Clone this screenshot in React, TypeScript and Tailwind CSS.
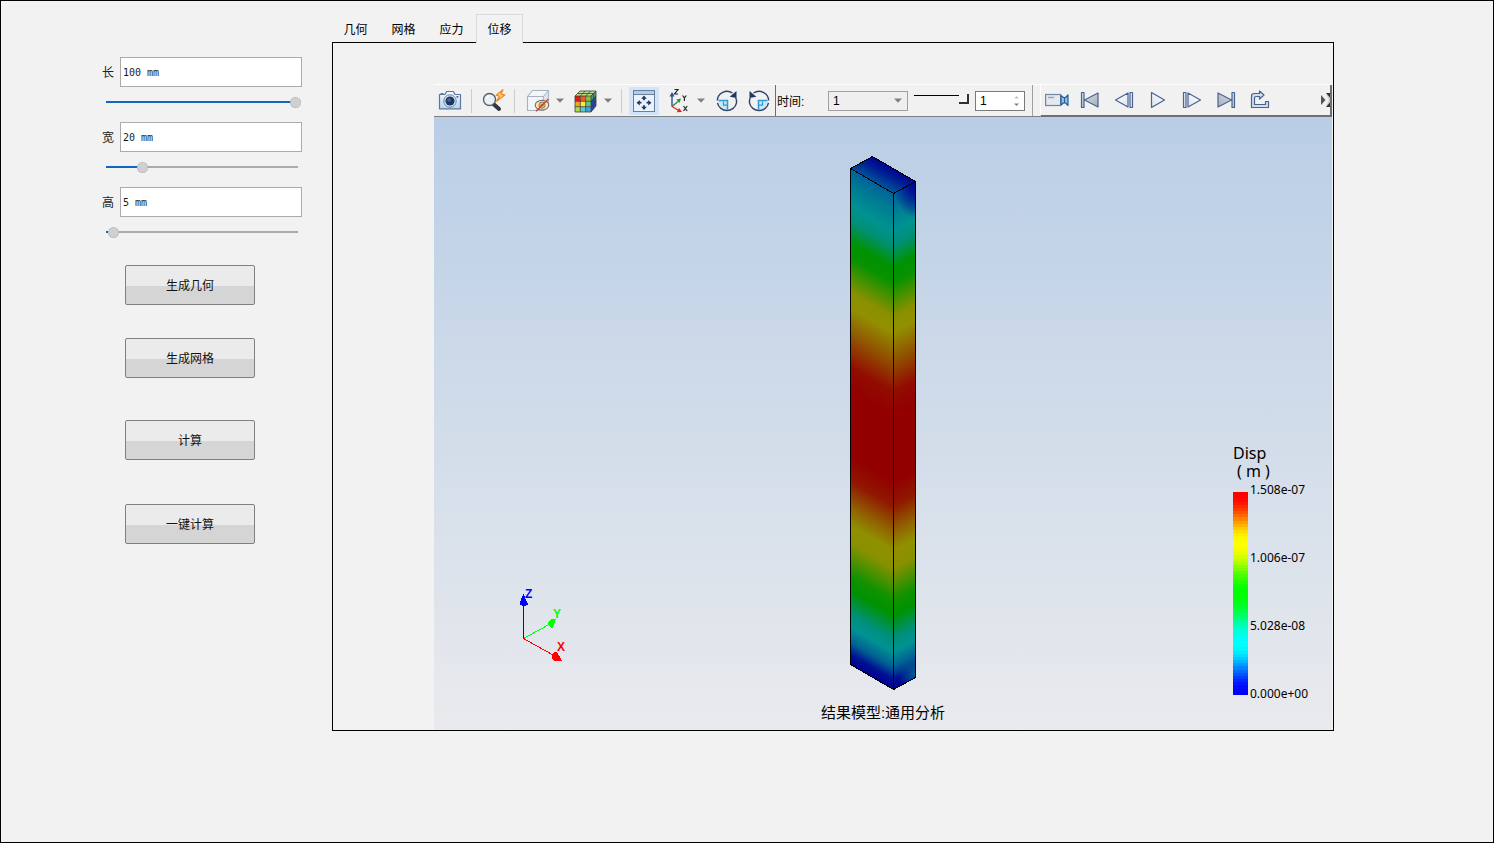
import { useState } from "react";
import type { ReactNode } from "react";

const INK = "#1f3864";

function CameraIcon() {
  return (
    <svg width="24" height="22" viewBox="0 0 24 22" aria-hidden="true">
      <defs>
        <linearGradient id="camBody" x1="0" y1="0" x2="0" y2="1">
          <stop offset="0" stopColor="#f4f9fe" />
          <stop offset="1" stopColor="#b9d3ee" />
        </linearGradient>
      </defs>
      <path d="M1.5 4.5h5.500l1.600-3h6.800l1.600 3h5.500v14.400h-21z" fill="url(#camBody)" stroke="#5b789f" strokeWidth="1.2" strokeLinejoin="round" />
      <path d="M2.500 3.500h3" stroke="#5b789f" />
      <circle cx="12" cy="11" r="6.200" fill="#dbe9f7" stroke="#6681a6" />
      <circle cx="12" cy="11" r="4.600" fill="#1d3765" />
      <circle cx="11" cy="10" r="1.800" fill="#4a6694" />
      <rect x="18.5" y="6" width="1.8" height="1.6" fill="#3f5f90" />
    </svg>
  );
}

function QueryIcon() {
  return (
    <svg width="26" height="24" viewBox="0 0 26 24" aria-hidden="true">
      <path d="M13.500 15l5.500 5" stroke="#33373d" strokeWidth="4" strokeLinecap="round" />
      <circle cx="9.500" cy="10.500" r="6" fill="#e9f1f8" stroke="#59616b" strokeWidth="1.4" />
      <path d="M6.500 9.500a3.400 3.400 0 0 1 3-2.600" fill="none" stroke="#fff" strokeWidth="1.3" />
      <path d="M23 0.800l-7 5.400 3.600 1-3 5 8.200-6.200-3.800-.9z" fill="#fdd98a" stroke="#ee8a22" strokeWidth="1.3" strokeLinejoin="round" />
    </svg>
  );
}

function HideBoxIcon() {
  return (
    <svg width="26" height="24" viewBox="0 0 26 24" aria-hidden="true">
      <path d="M2.5 7.5l5-6h16v14l-5 6h-16z" fill="#f3f5f8" stroke="#a7b2c1" strokeWidth="1.1" strokeLinejoin="round" />
      <path d="M2.5 7.5h16v14M18.5 7.5l5-6" fill="none" stroke="#a7b2c1" strokeWidth="1.1" />
      <path d="M18.9 7.8l4.3-5.2v12.7l-4.3 5.2z" fill="#dce2ea" />
      <ellipse cx="17" cy="16.2" rx="6.8" ry="4.800" fill="#fbe8b0" stroke="#77706a" strokeWidth="1.1" />
      <circle cx="17" cy="16.2" r="3.1" fill="#e9c46b" stroke="#8a7d60" />
      <circle cx="17" cy="16.2" r="1.3" fill="#5576a5" />
      <path d="M11 22.3L23.5 10" stroke="#d23c2c" strokeWidth="1.4" />
    </svg>
  );
}

function ColorCubeIcon() {
  return (
    <svg width="24" height="24" viewBox="0 0 24 24" aria-hidden="true">
      <path d="M1 7l5-5h16l-5 5z" fill="#b7e08f" />
      <path d="M17 7l5-5v15l-5 6z" fill="#2347a8" />
      <path d="M17 7l5-5v5l-5 5z" fill="#4e9a68" />
      <path d="M1 7h5.3v5.3H1z" fill="#e21b1b" />
      <path d="M6.3 7h5.4v5.3H6.3z" fill="#ef5b25" />
      <path d="M11.7 7H17v5.3h-5.3z" fill="#86c440" />
      <path d="M1 12.3h5.3v5.4H1z" fill="#f0a221" />
      <path d="M6.3 12.3h5.4v5.4H6.3z" fill="#ffe83b" />
      <path d="M11.7 12.3H17v5.4h-5.3z" fill="#55c98a" />
      <path d="M1 17.7h5.3V23H1z" fill="#a6dd4c" />
      <path d="M6.3 17.7h5.4V23H6.3z" fill="#52cfc2" />
      <path d="M11.7 17.7H17V23h-5.3z" fill="#3aa4ee" />
      <path d="M1 7h16v16H1zM6.3 7v16M11.7 7v16M1 12.3h16M1 17.7h16M1 7l5-5h16l-5 5M6.3 7l5-5M11.7 7l5-5M3.4 4.5h16M22 2v15l-5 6M19.5 4.5v15.6M17 12.3l5-5.3M17 17.7l5-5.5" fill="none" stroke="#473c31" strokeWidth="0.8" />
    </svg>
  );
}

function FitIcon() {
  return (
    <svg width="24" height="24" viewBox="0 0 24 24" aria-hidden="true">
      <rect x="1.5" y="1.5" width="21" height="21" fill="#eaf3fb" stroke="#67809f" />
      <rect x="2" y="2" width="20" height="3" fill="#b7cade" />
      <path d="M1.5 5.5h21" stroke="#67809f" />
      <path d="M12 6.500l2.800 3.200h-1.900v1.600h-1.800V9.700H9.200zM12 21l-2.800-3.200h1.900v-1.600h1.800v1.600h1.900zM4.500 13.700l3.300-2.800v1.900h1.700v1.800H7.800v1.900zM19.500 13.700l-3.300 2.800v-1.900h-1.700v-1.800h1.700v-1.900z" fill={INK} />
    </svg>
  );
}

function AxesIcon() {
  return (
    <svg width="22" height="26" viewBox="0 0 22 26" aria-hidden="true">
      <path d="M4 18.500V7" stroke="#2a4f9c" strokeWidth="1.4" />
      <path d="M4 4l2.500 4.500h-5z" fill="#2a4f9c" />
      <path d="M4 18.500l6-5" stroke="#239142" strokeWidth="1.400" />
      <path d="M13 10.500l-1.500 4.500-3.200-3.600z" fill="#239142" />
      <path d="M4 18.500l6 3.500" stroke="#e02424" strokeWidth="1.400" />
      <path d="M14 24l-5.200.3 2.300-4.300z" fill="#e02424" />
      <path d="M6.500 1.500h3.500l-3.500 4.500h3.500" fill="none" stroke="#222" strokeWidth="1.200" />
      <path d="M14.500 7.500l1.900 2.400L18.300 7.500M16.400 9.900v3" fill="none" stroke="#222" strokeWidth="1.200" />
      <path d="M15.500 18l3.700 5M19.200 18l-3.700 5" stroke="#222" strokeWidth="1.200" />
    </svg>
  );
}

function RotateIcon({ reverse = false }: { reverse?: boolean }) {
  return (
    <svg width="24" height="24" viewBox="0 0 24 24" aria-hidden="true">
      <g transform={reverse ? "matrix(-1 0 0 1 24 0)" : undefined}>
        <path d="M3.500 12h9v8.500a9 9 0 0 1-9-8.500z" fill="#c5e8fa" />
        <path d="M3.500 11.500h9V20.500" fill="none" stroke="#2f9ad2" strokeWidth="1.500" />
        <path d="M8.500 12.500v3.700h4" fill="none" stroke="#2f9ad2" strokeWidth="1.200" />
        <path d="M17.500 4A9.700 9.700 0 0 0 2.300 11.500M2.500 13.800a9.700 9.700 0 0 0 19 0 9.700 9.700 0 0 0-.8-5" fill="none" stroke="#32466b" strokeWidth="1.400" />
        <path d="M21.500 2v7l-6.800-1.300z" fill={INK} />
      </g>
    </svg>
  );
}

function VideoIcon() {
  return (
    <svg width="24" height="14" viewBox="0 0 24 14" aria-hidden="true">
      <rect x="0.600" y="1.500" width="15" height="11" fill="#e3e9f0" stroke="#7184a0" strokeWidth="1.200" />
      <path d="M3 4.500h6" stroke="#9aa6b6" strokeWidth="1.500" />
      <path d="M16 2.500l2.500 2h2L23 2v10.500L20.500 10h-2L16 12z" fill="#87bce4" stroke="#2b5c96" strokeWidth="1.200" strokeLinejoin="round" />
      <path d="M19.500 4.500v5.500" stroke="#2b5c96" />
    </svg>
  );
}

type PlayKind = "first" | "prev" | "play" | "next" | "last";

function PlaybackIcon({ kind }: { kind: PlayKind }) {
  const flip = kind === "next" || kind === "last" || kind === "play";
  const edge = kind === "first" || kind === "last";
  return (
    <svg width="20" height="18" viewBox="0 0 20 18" aria-hidden="true">
      <defs>
        <linearGradient id={"play-" + kind} x1="0" y1="0" x2="1" y2="1">
          <stop offset="0" stopColor={edge ? "#dfe2e6" : "#ffffff"} />
          <stop offset="1" stopColor={edge ? "#a5adb8" : "#d9e0e8"} />
        </linearGradient>
      </defs>
      <g transform={flip ? "matrix(-1 0 0 1 20 0)" : undefined} stroke="#496290" strokeWidth="1.200" strokeLinejoin="round">
        {edge && <path d="M1.500 1.500h2.500v15H1.500zM18 2v14L4.500 9z" fill={"url(#play-" + kind + ")"} />}
        {kind === "play" && <path d="M16.500 1.500v15L3.500 9z" fill="url(#play-play)" />}
        {(kind === "prev" || kind === "next") && (
          <path d="M14 2v14L1.500 9zM16 1.500h2.500v15H16z" fill={"url(#play-" + kind + ")"} />
        )}
      </g>
    </svg>
  );
}

function ExportIcon() {
  return (
    <svg width="20" height="20" viewBox="0 0 20 20" aria-hidden="true">
      <path
        d="M1.500 17.500V6Q1.500 3.500 4 3.500h5.500V1l4.500 4-4.500 4V6.500H6Q4.500 6.500 4.500 8v6.500h11V11.500H18.500v6z"
        fill="#cfdeed"
        stroke="#496290"
        strokeWidth="1.200"
        strokeLinejoin="round"
      />
    </svg>
  );
}

function DownTriangle() {
  return (
    <svg width="8" height="5" viewBox="0 0 8 5" className="fill-[#808080]" aria-hidden="true">
      <path d="M0 0.500h8L4 4.800z" />
    </svg>
  );
}

function ToolButton({ label, wide = false, children }: { label: string; wide?: boolean; children: ReactNode }) {
  return (
    <button
      type="button"
      aria-label={label}
      className={`flex h-8 shrink-0 items-center justify-center ${wide ? "w-[34px]" : "w-8"}`}
    >
      {children}
    </button>
  );
}

function MenuArrow({ label }: { label: string }) {
  return (
    <button type="button" aria-label={label} className="flex h-8 w-4 shrink-0 items-center pl-0.5">
      <DownTriangle />
    </button>
  );
}

function Separator() {
  return <span className="mx-[5px] h-6 w-px shrink-0 bg-[#cdcdcd]" />;
}

function Toolbar() {
  const [step, setStep] = useState("1");
  return (
    <div className="flex h-[33px] items-start border-t border-b border-t-white border-b-[#7f7f7f] bg-[#f1f1f1]">
      <div className="flex h-[31px] shrink-0 items-center">
        <ToolButton label="截图"><CameraIcon /></ToolButton>
        <Separator />
        <ToolButton label="查询"><QueryIcon /></ToolButton>
        <Separator />
        <div className="flex pl-0.5">
          <ToolButton label="隐藏"><HideBoxIcon /></ToolButton>
          <MenuArrow label="隐藏选项" />
          <ToolButton label="云图"><ColorCubeIcon /></ToolButton>
          <MenuArrow label="云图选项" />
        </div>
        <span className="mr-[7px] ml-[3px] h-6 w-px shrink-0 bg-[#cdcdcd]" />
        <button type="button" aria-label="适应窗口" className="flex h-7 w-[30px] items-center justify-center bg-[#d3e3f8]">
          <FitIcon />
        </button>
        <div className="flex pl-1">
          <ToolButton label="视角"><AxesIcon /></ToolButton>
          <MenuArrow label="视角选项" />
          <ToolButton label="顺时针旋转"><RotateIcon /></ToolButton>
          <ToolButton label="逆时针旋转"><RotateIcon reverse /></ToolButton>
        </div>
      </div>
      <div className="flex h-[31px] shrink-0 items-center border-l border-[#6d6d6d] pl-px">
        <label htmlFor="time" className="w-[51px] pt-0.5 text-xs text-black">时间:</label>
        <div className="relative">
          <select
            id="time"
            defaultValue="1"
            className="block h-5 w-20 appearance-none border border-[#a0a0a0] bg-[#efefef] pl-1 text-xs leading-4 text-black"
          >
            <option>1</option>
          </select>
          <span className="pointer-events-none absolute top-[7px] right-1.5">
            <DownTriangle />
          </span>
        </div>
        <input
          type="range"
          aria-label="时间步"
          min={0}
          max={1}
          defaultValue={1}
          className="mb-1 ml-1.5 h-[11px] w-[55px] appearance-none bg-[linear-gradient(#000,#000)] bg-[length:46px_1px] bg-[position:left_2px] bg-no-repeat [&::-webkit-slider-thumb]:h-[10px] [&::-webkit-slider-thumb]:w-[10px] [&::-webkit-slider-thumb]:appearance-none [&::-webkit-slider-thumb]:border-r-2 [&::-webkit-slider-thumb]:border-b-2 [&::-webkit-slider-thumb]:border-[#303030] [&::-webkit-slider-thumb]:bg-[#f4f4f4]"
        />
        <div className="ml-1.5 flex h-5 w-[50px] items-center border border-[#7a7a7a] bg-white">
          <input
            aria-label="步数"
            value={step}
            onChange={(e) => setStep(e.target.value)}
            className="h-4 w-0 flex-1 pl-1 text-xs text-black outline-none"
          />
          <svg width="7" height="12" viewBox="0 0 7 12" className="mr-1" aria-hidden="true">
            <path d="M1 3.500h5L3.500 1z" fill="#c4c4c4" />
            <path d="M1 8.500h5L3.500 11z" fill="#808080" />
          </svg>
        </div>
        <span className="mx-[7px] h-[31px] w-px bg-[#a0a0a0]" />
      </div>
      <div className="flex h-8 min-w-0 flex-1 items-center border-r-2 border-b-2 border-l border-[#6f6f6f] border-l-white bg-[#f1f1f1]">
        <ToolButton label="录制"><VideoIcon /></ToolButton>
        <ToolButton label="第一帧" wide><PlaybackIcon kind="first" /></ToolButton>
        <ToolButton label="上一帧" wide><PlaybackIcon kind="prev" /></ToolButton>
        <ToolButton label="播放" wide><PlaybackIcon kind="play" /></ToolButton>
        <ToolButton label="下一帧" wide><PlaybackIcon kind="next" /></ToolButton>
        <ToolButton label="最后一帧" wide><PlaybackIcon kind="last" /></ToolButton>
        <ToolButton label="导出" wide><ExportIcon /></ToolButton>
        <button type="button" aria-label="更多" className="ml-auto">
          <svg width="9" height="16" viewBox="0 0 9 16" aria-hidden="true">
            <path d="M0 3l4.500 5L0 13z" fill="#555" />
            <path d="M5 1h4v14H5l3-7z" fill="#c9c9c9" />
            <path d="M5 1h4v4.500zM5 15h4v-4.500z" fill="#333" />
          </svg>
        </button>
      </div>
    </div>
  );
}

const faceStops: [number, string][] = [
  [0, "#00629a"],
  [0.035, "#007c94"],
  [0.075, "#009290"],
  [0.105, "#009078"],
  [0.15, "#009200"],
  [0.18, "#089200"],
  [0.25, "#8a9000"],
  [0.28, "#929000"],
  [0.34, "#905000"],
  [0.4, "#920c00"],
  [0.45, "#920000"],
  [0.58, "#920000"],
  [0.63, "#901800"],
  [0.68, "#906000"],
  [0.72, "#909000"],
  [0.755, "#8a9000"],
  [0.82, "#109200"],
  [0.85, "#009200"],
  [0.9, "#009080"],
  [0.925, "#009292"],
  [0.955, "#006092"],
  [0.98, "#001092"],
  [1, "#000092"],
];

function BeamModel() {
  return (
    <svg width="66" height="535" viewBox="0 0 66 535" role="img" aria-label="位移云图">
      <defs>
        <linearGradient id="face" x1="0" y1="0" x2="0" y2="1">
          {faceStops.map(([offset, color]) => (
            <stop key={offset} offset={offset} stopColor={color} />
          ))}
        </linearGradient>
        <linearGradient id="cap" gradientUnits="userSpaceOnUse" x1="38" y1="8" x2="25" y2="32">
          <stop offset="0" stopColor="#000092" />
          <stop offset="0.35" stopColor="#001c94" />
          <stop offset="1" stopColor="#00689a" />
        </linearGradient>
        <radialGradient id="corner" gradientUnits="userSpaceOnUse" cx="0" cy="0" r="1" gradientTransform="translate(66 28) scale(23 34)">
          <stop offset="0" stopColor="#000092" />
          <stop offset="0.35" stopColor="#000e94" stopOpacity="0.9" />
          <stop offset="1" stopColor="#000092" stopOpacity="0" />
        </radialGradient>
        <radialGradient id="foot" gradientUnits="userSpaceOnUse" cx="0" cy="0" r="1" gradientTransform="translate(66 518) scale(18 22)">
          <stop offset="0" stopColor="#006c92" stopOpacity="0.9" />
          <stop offset="1" stopColor="#006c92" stopOpacity="0" />
        </radialGradient>
      </defs>
      <rect width="43.500" height="496" fill="url(#face)" transform="matrix(1 0.580 0 1 0 12.500)" />
      <rect width="22.500" height="496" fill="url(#face)" transform="matrix(1 -0.545 0 1 43.500 37.500)" />
      <path d="M43.500 37.500l22-12v50l-22 12z" fill="url(#corner)" />
      <path d="M43.500 533.500l22-12v-30l-22 12z" fill="url(#foot)" />
      <path d="M.5 12.500l22-12 43 25-22 12z" fill="url(#cap)" />
      <path
        d="M.5 12.500l22-12 43 25-22 12zM.5 12.500v496l43 25v-496M65.500 25.500v496l-22 12"
        fill="none"
        stroke="#000"
        shapeRendering="crispEdges"
      />
    </svg>
  );
}

function AxisTriad() {
  return (
    <svg
      width="52"
      height="78"
      viewBox="0 0 52 78"
      className="absolute bottom-[65px] left-[84px] text-xs font-bold"
      role="img"
      aria-label="坐标轴"
    >
      <g shapeRendering="crispEdges">
        <path d="M5.500 51.500V16" stroke="#0000ff" />
        <path d="M5.500 51.500L32 37" stroke="#00ff00" />
        <path d="M5.500 51.500L36 68.500" stroke="#ff0000" />
        <path d="M5.500 7l4 9v1.500h-2v1h-4v-1h-2V16z" fill="#0000ff" />
        <path d="M38 32h-5l-3 3v3l3 2.500h2z" fill="#00ff00" />
        <path d="M34 67l3-2h2l5 8.500h-8l-2-2.500z" fill="#ff0000" />
      </g>
      <text x="7" y="11" fill="#0000ff">Z</text>
      <text x="35" y="31" fill="#00ff00">Y</text>
      <text x="39" y="64" fill="#ff0000">X</text>
    </svg>
  );
}

const BAND_COUNT = 64;
const legendColors: [number, number, number][] = [
  [255, 0, 0],
  [255, 255, 0],
  [0, 255, 0],
  [0, 255, 255],
  [0, 0, 255],
];

function bandColor(index: number) {
  const t = (index / (BAND_COUNT - 1)) * 4;
  const segment = Math.min(3, Math.floor(t));
  const eased = (1 - Math.cos((t - segment) * Math.PI)) / 2;
  const mixed = legendColors[segment].map((from, channel) =>
    Math.round(from + (legendColors[segment + 1][channel] - from) * eased),
  );
  return `rgb(${mixed.join(",")})`;
}

function Legend() {
  return (
    <div className="absolute right-0 bottom-[30px] w-[99px] font-['Noto_Sans','Noto_Sans_CJK_SC',sans-serif] text-black">
      <p className="text-base leading-[18px]">
        Disp
        <br />
        <span className="pl-1">( m )</span>
      </p>
      <div className="mt-1 flex h-[216px]">
        <svg width="15" height="203" viewBox="0 0 15 203" className="mt-2 shrink-0" shapeRendering="crispEdges" aria-hidden="true">
          {Array.from({ length: BAND_COUNT }, (_, i) => (
            <rect key={i} y={(i * 203) / BAND_COUNT} width="15" height={203 / BAND_COUNT} fill={bandColor(i)} />
          ))}
        </svg>
        <ul className="flex flex-col justify-between pl-0.5 text-xs leading-3">
          <li>1.508e-07</li>
          <li>1.006e-07</li>
          <li>5.028e-08</li>
          <li>0.000e+00</li>
        </ul>
      </div>
    </div>
  );
}

function ResultView() {
  return (
    <section className="mt-[41px] mr-px ml-[101px] flex flex-col">
      <Toolbar />
      <div className="relative flex flex-col items-center bg-linear-to-b from-[#b9cee6] to-[#e9eaed] pt-[39px] pb-[7px]">
        <BeamModel />
        <p className="mt-[11px] text-[15px] leading-[21px] text-black">结果模型:通用分析</p>
        <AxisTriad />
        <Legend />
      </div>
    </section>
  );
}

const MIN_SIZE = 4;
const MAX_SIZE = 100;

function SizeField({ id, label, initial }: { id: string; label: string; initial: number }) {
  const [size, setSize] = useState(initial);
  const filled = ((size - MIN_SIZE) / (MAX_SIZE - MIN_SIZE)) * 100;
  return (
    <div className="flex flex-col gap-2">
      <div className="flex items-center">
        <label htmlFor={id} className="w-[18px] pt-0.5 text-xs text-[#222]">{label}</label>
        <input
          id={id}
          value={size + " mm"}
          onChange={(e) => setSize(Math.min(MAX_SIZE, parseInt(e.target.value, 10) || MIN_SIZE))}
          className="h-[30px] w-[182px] border border-[#ababab] bg-white px-0.5 font-['DejaVu_Sans_Mono',monospace] text-[10px] text-[#1a1a1a] outline-none"
        />
      </div>
      <input
        type="range"
        aria-label={label + "滑块"}
        min={MIN_SIZE}
        max={MAX_SIZE}
        value={size}
        onChange={(e) => setSize(Number(e.target.value))}
        style={{ backgroundImage: `linear-gradient(to right, #1068bd ${filled}%, #ababab ${filled}%)` }}
        className="ml-1 h-3.5 w-[195px] appearance-none bg-[length:192px_2px] bg-[position:left_center] bg-no-repeat [&::-webkit-slider-thumb]:h-[11px] [&::-webkit-slider-thumb]:w-[11px] [&::-webkit-slider-thumb]:appearance-none [&::-webkit-slider-thumb]:rounded-full [&::-webkit-slider-thumb]:border [&::-webkit-slider-thumb]:border-dotted [&::-webkit-slider-thumb]:border-[#a8a8a8] [&::-webkit-slider-thumb]:bg-[#d0d0d0]"
      />
    </div>
  );
}

function ActionButton({ children }: { children: ReactNode }) {
  return (
    <button
      type="button"
      className="h-10 w-[130px] rounded-xs border border-[#808080] bg-[linear-gradient(#ebebeb_52%,#d5d5d5_52%)] pt-0.5 text-xs text-[#111]"
    >
      {children}
    </button>
  );
}

const tabs = ["几何", "网格", "应力", "位移"];

export default function App() {
  const [active, setActive] = useState("位移");
  return (
    <div className="flex min-h-screen border border-black bg-[#f2f2f2] font-['Liberation_Sans','Noto_Sans_CJK_SC',sans-serif]">
      <aside className="w-[331px] shrink-0 pt-14 pl-[101px]">
        <div className="flex flex-col gap-[13px]">
          <SizeField id="length" label="长" initial={100} />
          <SizeField id="width" label="宽" initial={20} />
          <SizeField id="height" label="高" initial={5} />
        </div>
        <div className="mt-[26px] flex flex-col items-start pl-[23px]">
          <ActionButton>生成几何</ActionButton>
          <div className="mt-[33px]"><ActionButton>生成网格</ActionButton></div>
          <div className="mt-[42px]"><ActionButton>计算</ActionButton></div>
          <div className="mt-[44px]"><ActionButton>一键计算</ActionButton></div>
        </div>
      </aside>
      <main className="min-w-0 flex-1 pt-[13px] pr-[159px]">
        <div role="tablist" className="flex gap-px">
          {tabs.map((tab) => (
            <button
              key={tab}
              type="button"
              role="tab"
              aria-selected={tab === active}
              onClick={() => setActive(tab)}
              className={`relative -mb-px h-[29px] w-[47px] border border-b-0 pt-0.5 text-xs text-black ${
                tab === active ? "z-10 border-[#d9d9d9] bg-[#f2f2f2]" : "border-transparent"
              }`}
            >
              {tab}
            </button>
          ))}
        </div>
        <div className="border border-black">
          <ResultView />
        </div>
      </main>
    </div>
  );
}
